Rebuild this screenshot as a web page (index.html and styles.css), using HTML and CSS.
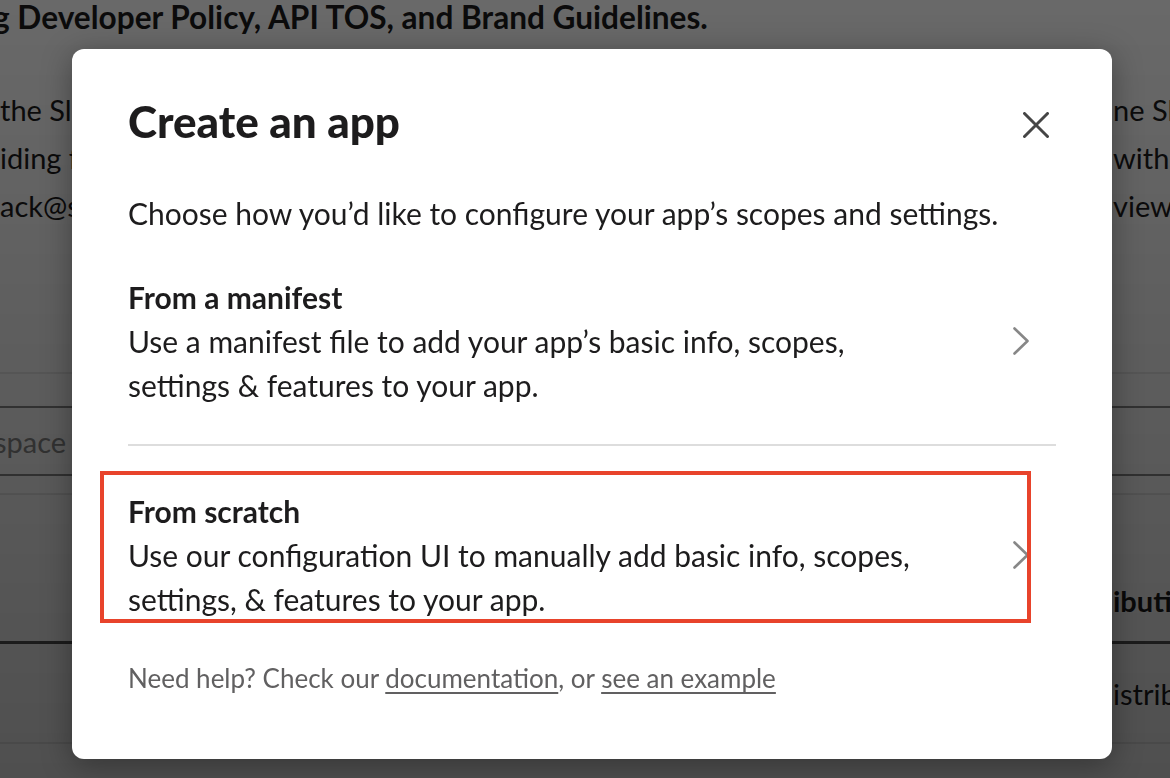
FILE: index.html
```html
<!DOCTYPE html>
<html lang="en">
<head>
  <meta charset="UTF-8">
  <meta name="viewport" content="width=device-width, initial-scale=1.0">
  <title>Create an app</title>
  <link rel="stylesheet" href="styles.css">
</head>
<body>
  <!-- Page behind the modal -->
  <div class="page">
    <p class="notice">g Developer Policy, API TOS, and Brand Guidelines.</p>
    <div class="terms">
      <div class="terms-line"><span class="frag-left">the Slack API Terms of Service</span><span class="frag-right">ne Slack</span></div>
      <div class="terms-line"><span class="frag-left">iding feedback</span><span class="frag-right">with the</span></div>
      <div class="terms-line"><span class="frag-left">ack@slack.com</span><span class="frag-right">view our</span></div>
    </div>
    <div class="rule-light rule-top"></div>
    <div class="field">
      <span class="placeholder">space</span>
    </div>
    <div class="rule-light"></div>
    <div class="section-head">
      <span class="frag-right bold">ibution</span>
    </div>
    <div class="rule-dark"></div>
    <div class="section-row">
      <span class="frag-right">istribute</span>
    </div>
    <div class="rule-light"></div>
  </div>

  <div class="backdrop"></div>

  <div class="modal">
    <div class="modal-header">
      <h1>Create an app</h1>
      <button class="close" aria-label="Close">
        <svg width="26" height="26" viewBox="0 0 26 26"><path d="M1.5 1.5 L24.5 24.5 M24.5 1.5 L1.5 24.5" stroke="#454545" stroke-width="3" stroke-linecap="round" fill="none"/></svg>
      </button>
    </div>
    <p class="lead">Choose how you’d like to configure your app’s scopes and settings.</p>

    <div class="options">
      <div class="option">
        <div class="option-text">
          <h2>From a manifest</h2>
          <p>Use a manifest file to add your app’s basic info, scopes, settings &amp; features to your app.</p>
        </div>
        <svg class="chevron" width="16" height="28" viewBox="0 0 16 28"><path d="M1.5 1.5 L14.5 14 L1.5 26.5" stroke="#878787" stroke-width="2.6" stroke-linecap="round" stroke-linejoin="round" fill="none"/></svg>
      </div>
      <div class="option-divider"></div>
      <div class="option highlight">
        <div class="option-text">
          <h2>From scratch</h2>
          <p>Use our configuration UI to manually add basic info, scopes, settings, &amp; features to your app.</p>
        </div>
        <svg class="chevron" width="16" height="28" viewBox="0 0 16 28"><path d="M1.5 1.5 L14.5 14 L1.5 26.5" stroke="#878787" stroke-width="2.6" stroke-linecap="round" stroke-linejoin="round" fill="none"/></svg>
      </div>
    </div>

    <p class="help">Need help? Check our <a href="#">documentation</a>, or <a href="#">see an example</a></p>
  </div>
</body>
</html>
```

FILE: styles.css
```css
body {
  margin: 0;
  font-family: Lato, "Open Sans", "Liberation Sans", sans-serif;
  color: #1d1c1d;
  background: #fff;
}

/* page behind the modal */
.page {
  height: 778px;
  overflow: hidden;
  font-size: 29px;
}

.notice {
  margin: 0 0 0 -7px;
  font-size: 31.6px;
  font-weight: 700;
  line-height: 34px;
  white-space: nowrap;
}

.terms {
  margin-top: 52px;
}

.terms-line {
  display: flex;
  justify-content: space-between;
  height: 48px;
  line-height: 48px;
}

.frag-left {
  white-space: nowrap;
  width: 72px;
  overflow: hidden;
}

.frag-right {
  white-space: nowrap;
  width: 58px;
  overflow: hidden;
  margin-left: auto;
  text-indent: 1px;
}

.bold {
  font-weight: 700;
}

.rule-light {
  height: 2px;
  background: #e8e8e8;
}

.rule-top {
  margin-top: 142px;
}

.rule-dark {
  height: 3px;
  background: #555;
}

.field {
  margin-top: 32px;
  height: 66px;
  border-top: 2px solid #8a8a8a;
  border-bottom: 2px solid #8a8a8a;
  margin-bottom: 17px;
  display: flex;
  align-items: center;
}

.placeholder {
  color: #8a8a8a;
  margin-left: -6px;
}

.section-head {
  display: flex;
  height: 44px;
  line-height: 44px;
  margin-top: 84px;
  margin-bottom: 18px;
}

.section-row {
  display: flex;
  height: 44px;
  line-height: 44px;
  margin-top: 28px;
  margin-bottom: 26px;
}

.backdrop {
  position: fixed;
  inset: 0;
  background: linear-gradient(to bottom, rgba(0, 0, 0, 0.59), rgba(0, 0, 0, 0.69));
}

/* modal */
.modal {
  position: absolute;
  top: 49px;
  left: 72px;
  width: 1040px;
  height: 710px;
  box-sizing: border-box;
  padding: 44px 56px 0;
  background: #fff;
  border-radius: 12px;
  box-shadow: 0 6px 30px rgba(0, 0, 0, 0.35);
}

.modal-header {
  display: flex;
  justify-content: space-between;
  align-items: center;
  height: 56px;
}

.modal-header h1 {
  margin: 0;
  font-size: 44px;
  font-weight: 900;
  line-height: 56px;
}

.close {
  border: none;
  background: transparent;
  padding: 0;
  margin: 8px 7px 0 0;
  width: 26px;
  height: 26px;
  cursor: pointer;
}

.lead {
  margin: 42px 0 0;
  font-size: 30px;
  line-height: 44px;
}

.options {
  margin-top: 40px;
}

.option {
  display: flex;
  align-items: center;
  justify-content: space-between;
  cursor: pointer;
}

.option-text {
  max-width: 800px;
}

.option h2 {
  margin: 0;
  font-size: 30px;
  font-weight: 700;
  line-height: 44px;
}

.option p {
  margin: 0;
  font-size: 30px;
  line-height: 44px;
}

.chevron {
  margin-right: 27px;
  flex: none;
}

.option-divider {
  height: 2px;
  background: #dddddd;
  margin: 37px 0 43px;
}

/* red annotation frame over the second option */
.highlight {
  position: relative;
}

.highlight::after {
  content: "";
  position: absolute;
  left: -28px;
  right: 25px;
  top: -18px;
  bottom: -2px;
  border: 4px solid #e8432b;
  pointer-events: none;
}

.help {
  margin: 35px 0 0;
  font-size: 26px;
  line-height: 44px;
  color: #616061;
}

.help a {
  color: #616061;
  text-decoration: underline;
  text-underline-offset: 4px;
}
```
